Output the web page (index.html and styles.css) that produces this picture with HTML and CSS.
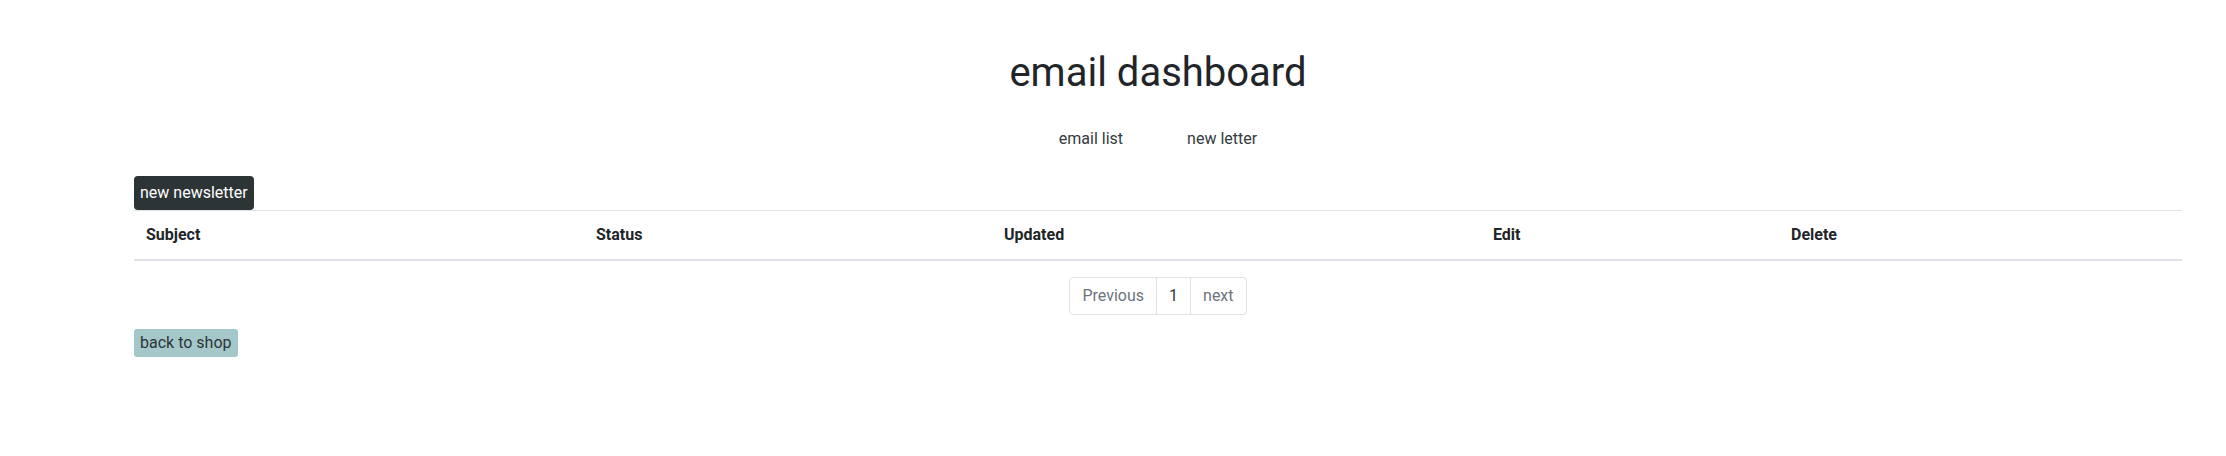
FILE: index.html
```html
<!DOCTYPE html>
<html lang="en">
<head>
<meta charset="utf-8">
<title>email dashboard</title>
<link rel="stylesheet" href="styles.css">
</head>
<body>
<div class="container">
  <h1 class="title">email dashboard</h1>
  <nav class="nav">
    <a class="nav-link" href="#">email list</a>
    <a class="nav-link" href="#">new letter</a>
  </nav>
  <div class="toolbar">
    <a class="btn btn-dark" href="#">new newsletter</a>
  </div>
  <table class="table">
    <colgroup>
      <col class="c-subject">
      <col class="c-status">
      <col class="c-updated">
      <col class="c-edit">
      <col class="c-delete">
    </colgroup>
    <thead>
      <tr>
        <th>Subject</th>
        <th>Status</th>
        <th>Updated</th>
        <th>Edit</th>
        <th>Delete</th>
      </tr>
    </thead>
    <tbody></tbody>
  </table>
  <ul class="pagination">
    <li class="page-item"><a class="page-link muted" href="#">Previous</a></li>
    <li class="page-item"><a class="page-link active" href="#">1</a></li>
    <li class="page-item"><a class="page-link muted" href="#">next</a></li>
  </ul>
  <div class="footer-actions">
    <a class="btn-back" href="#">back to shop</a>
  </div>
</div>
</body>
</html>
```

FILE: styles.css
```css
* { box-sizing: border-box; }

body {
  margin: 0;
  font-family: Roboto, "Liberation Sans", sans-serif;
  font-size: 16px;
  line-height: 24px;
  color: #212529;
  background: #fff;
}

.container {
  margin-left: 134px;
  width: 2048px;
}

.title {
  margin: 49px 0 0;
  font-size: 40px;
  line-height: 48px;
  font-weight: 400;
  text-align: center;
  color: #212529;
}

.nav {
  display: flex;
  justify-content: center;
  margin-top: 22px;
}

.nav-link {
  padding: 8px 32px;
  color: #343a40;
  text-decoration: none;
}

.toolbar {
  display: flex;
  margin-top: 17px;
}

.btn {
  display: block;
  padding: 5px 6px;
  line-height: 24px;
  border-radius: 4px;
  text-decoration: none;
}

.btn-dark {
  background: #2d3436;
  color: #fff;
}

.table {
  width: 100%;
  border-collapse: collapse;
  margin-bottom: 16px;
}

.c-subject { width: 450px; }
.c-status { width: 408px; }
.c-updated { width: 489px; }
.c-edit { width: 298px; }
.c-delete { width: 403px; }

.table th {
  padding: 12px;
  text-align: left;
  font-weight: 700;
  border-top: 1px solid #dee2e6;
  border-bottom: 2px solid #dee2e6;
}

.pagination {
  display: flex;
  justify-content: center;
  list-style: none;
  margin: 0 0 14px;
  padding: 0;
}

.page-link {
  display: block;
  padding: 6px 12px;
  line-height: 24px;
  border: 1px solid #dee2e6;
  margin-left: -1px;
  text-decoration: none;
  background: #fff;
}

.page-item:first-child .page-link {
  margin-left: 0;
  border-radius: 4px 0 0 4px;
}

.page-item:last-child .page-link {
  border-radius: 0 4px 4px 0;
}

.page-link.muted { color: #6c757d; }
.page-link.active { color: #343a40; }

.footer-actions {
  display: flex;
}

.btn-back {
  display: block;
  padding: 2px 6px;
  line-height: 24px;
  border-radius: 3px;
  background: #a4c8ca;
  color: #2d3436;
  text-decoration: none;
}
```
